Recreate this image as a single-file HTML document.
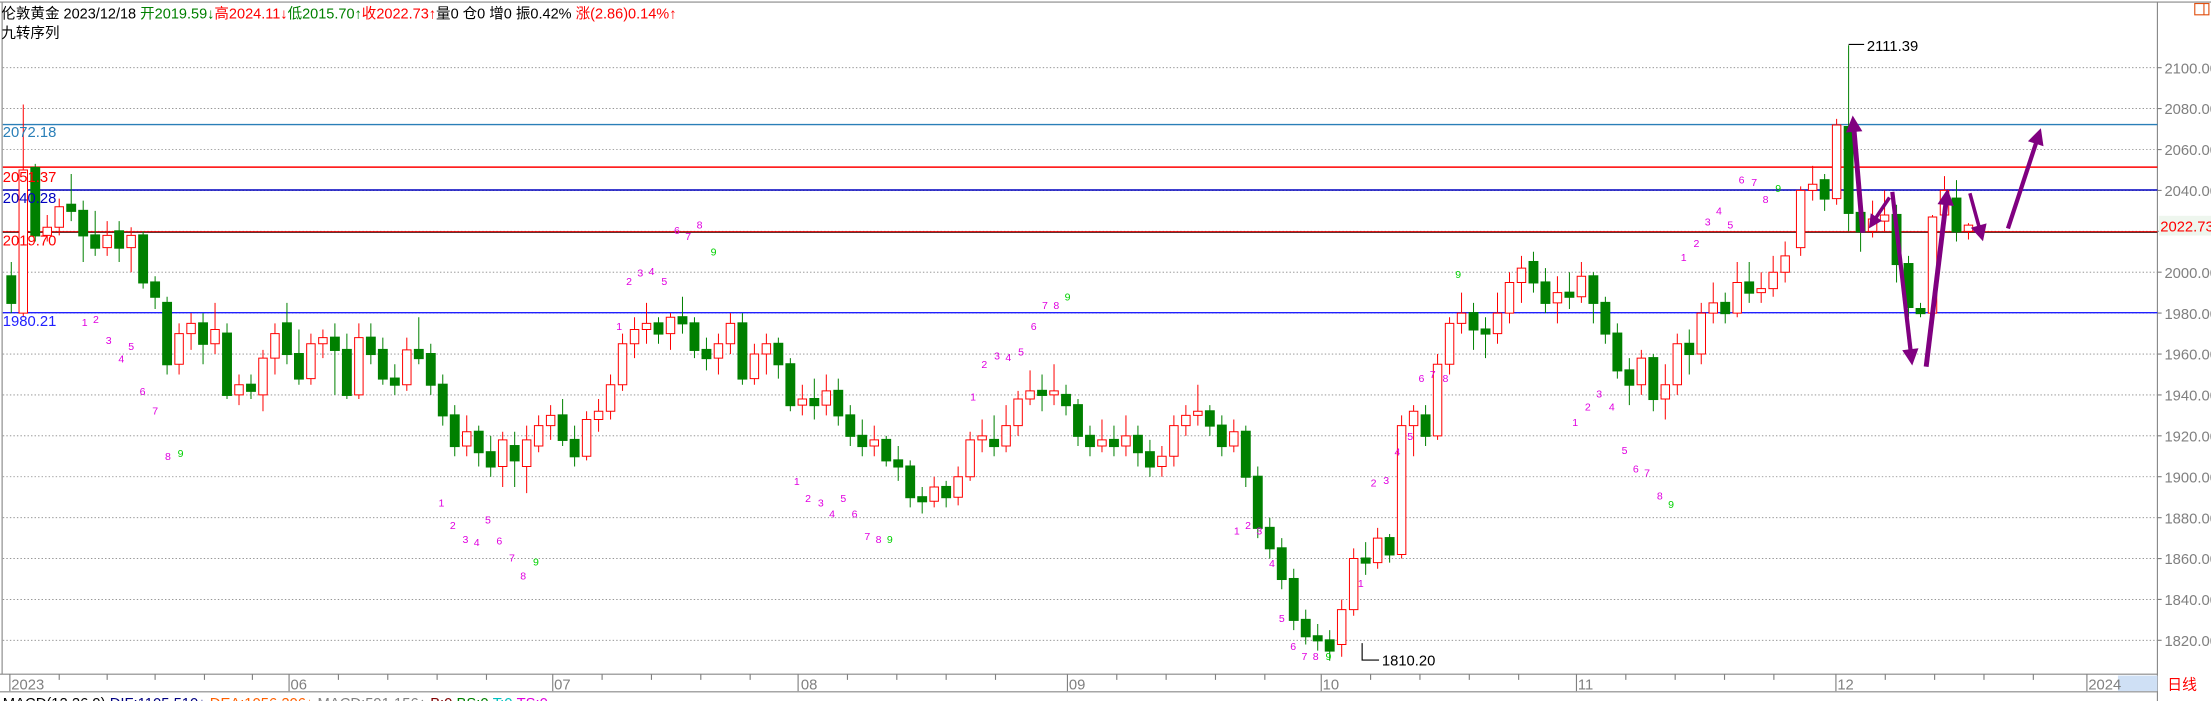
<!DOCTYPE html>
<html><head><meta charset="utf-8"><style>
html,body{margin:0;padding:0;background:#fff;overflow:hidden}
svg{display:block}
text{font-family:"Liberation Sans","Noto Sans CJK SC",sans-serif}
</style></head><body>
<svg width="2211" height="701" viewBox="0 0 1568 497" preserveAspectRatio="none" xmlns="http://www.w3.org/2000/svg">
<rect width="1568" height="497" fill="#fff"/>
<path d="M0 1.5H1568M1.5 1.5V478M1530 1.5V497M0 478H1530M0 490.5H1530" stroke="#888" stroke-width="0.8" fill="none"/>
<g stroke="#888" stroke-width="0.6" stroke-dasharray="1 1.5">
<path d="M2 48H1530M2 77H1530M2 106H1530M2 135H1530M2 164H1530M2 193H1530M2 222H1530M2 251H1530M2 280H1530M2 309H1530M2 338H1530M2 367H1530M2 396H1530M2 425H1530M2 454H1530"/>
</g>
<path d="M2 88.3H1530" stroke="#2a7fb8" stroke-width="1"/>
<path d="M2 118.5H1530" stroke="#ff0000" stroke-width="1"/>
<path d="M2 134.7H1530" stroke="#0000c0" stroke-width="1"/>
<path d="M2 164.4H1530" stroke="#e00000" stroke-width="1"/>
<path d="M2 164.9H1530" stroke="#404040" stroke-width="0.5"/>
<path d="M2 221.7H1530" stroke="#2020ff" stroke-width="1"/>
<g transform="matrix(1 0 0 -1.45 0 3093)">
<g fill="#008000" stroke="#008000" stroke-width="1">
<path vector-effect="non-scaling-stroke" fill="none" d="M8 1980V2005M25 2015V2053M50.5 2025V2048M59 2005V2035M67.5 2008V2030M84.5 2005V2025M101.5 1992V2020M110 1982V1998M118.5 1950V1988M144 1955V1980M161 1938V1975M178 1938V1950M203.5 1955V1985M212 1945V1972M237.5 1940V1975M246 1938V1970M263 1955V1975M271.5 1945V1968M280 1940V1955M297 1955V1978M305.5 1940V1965M314 1925V1950M322.5 1910V1935M339.5 1905V1925M348 1900V1920M365 1895V1922M399 1915V1938M407.5 1905V1925M467 1965V1978M484 1970V1988M492.5 1958V1978M501 1952V1968M526.5 1945V1980M552 1948V1968M560.5 1932V1958M577.5 1928V1948M594.5 1925V1948M603 1915V1935M611.5 1910V1928M628.5 1905V1920M637 1898V1915M645.5 1885V1908M654 1882V1895M671 1885V1898M705 1910V1930M739 1932V1950M756 1930V1945M764.5 1915V1938M773 1910V1925M790 1910V1925M807 1905V1925M815.5 1900V1918M858 1920V1935M866.5 1910V1930M883.5 1895V1925M892 1870V1905M900.5 1860V1880M909 1845V1870M917.5 1825V1855M926 1818V1835M934.5 1815V1828M943 1810V1825M968.5 1852V1868M985.5 1858V1872M1011 1915V1935M1045 1962V1985M1053.5 1958V1978M1087.5 1990V2010M1096 1980V2002M1113 1982V2000M1130 1975V2000M1138.5 1965V1988M1147 1948V1975M1155.5 1935V1958M1172.5 1932V1960M1198 1950V1972M1223.5 1975V1990M1240.5 1985V2005M1294 2030V2048M1311 2020V2111M1319.5 2010V2030M1345 1995V2033M1353.5 1978V2008M1362 1978V1985M1387.5 2015V2045"/>
<rect x="5" y="1985" width="6" height="13"/><rect x="22" y="2018" width="6" height="33"/><rect x="47.5" y="2030" width="6" height="3"/><rect x="56" y="2018" width="6" height="12"/><rect x="64.5" y="2012" width="6" height="6"/><rect x="81.5" y="2012" width="6" height="8"/><rect x="98.5" y="1995" width="6" height="23"/><rect x="107" y="1988" width="6" height="7"/><rect x="115.5" y="1955" width="6" height="30"/><rect x="141" y="1965" width="6" height="10"/><rect x="158" y="1940" width="6" height="30"/><rect x="175" y="1942" width="6" height="3"/><rect x="200.5" y="1960" width="6" height="15"/><rect x="209" y="1948" width="6" height="12"/><rect x="234.5" y="1962" width="6" height="6"/><rect x="243" y="1940" width="6" height="22"/><rect x="260" y="1960" width="6" height="8"/><rect x="268.5" y="1948" width="6" height="14"/><rect x="277" y="1945" width="6" height="3"/><rect x="294" y="1958" width="6" height="4"/><rect x="302.5" y="1945" width="6" height="15"/><rect x="311" y="1930" width="6" height="15"/><rect x="319.5" y="1915" width="6" height="15"/><rect x="336.5" y="1912" width="6" height="10"/><rect x="345" y="1905" width="6" height="7"/><rect x="362" y="1908" width="6" height="7"/><rect x="396" y="1918" width="6" height="12"/><rect x="404.5" y="1910" width="6" height="8"/><rect x="464" y="1970" width="6" height="5"/><rect x="481" y="1975" width="6" height="3"/><rect x="489.5" y="1962" width="6" height="13"/><rect x="498" y="1958" width="6" height="4"/><rect x="523.5" y="1948" width="6" height="27"/><rect x="549" y="1955" width="6" height="10"/><rect x="557.5" y="1935" width="6" height="20"/><rect x="574.5" y="1935" width="6" height="3"/><rect x="591.5" y="1930" width="6" height="12"/><rect x="600" y="1920" width="6" height="10"/><rect x="608.5" y="1915" width="6" height="5"/><rect x="625.5" y="1908" width="6" height="10"/><rect x="634" y="1905" width="6" height="3"/><rect x="642.5" y="1890" width="6" height="15"/><rect x="651" y="1888" width="6" height="2"/><rect x="668" y="1890" width="6" height="5"/><rect x="702" y="1915" width="6" height="3"/><rect x="736" y="1940" width="6" height="2"/><rect x="753" y="1935" width="6" height="5"/><rect x="761.5" y="1920" width="6" height="15"/><rect x="770" y="1915" width="6" height="5"/><rect x="787" y="1915" width="6" height="3"/><rect x="804" y="1912" width="6" height="8"/><rect x="812.5" y="1905" width="6" height="7"/><rect x="855" y="1925" width="6" height="7"/><rect x="863.5" y="1915" width="6" height="10"/><rect x="880.5" y="1900" width="6" height="22"/><rect x="889" y="1875" width="6" height="25"/><rect x="897.5" y="1865" width="6" height="10"/><rect x="906" y="1850" width="6" height="15"/><rect x="914.5" y="1830" width="6" height="20"/><rect x="923" y="1822" width="6" height="8"/><rect x="931.5" y="1820" width="6" height="2"/><rect x="940" y="1815" width="6" height="5"/><rect x="965.5" y="1858" width="6" height="2"/><rect x="982.5" y="1862" width="6" height="8"/><rect x="1008" y="1920" width="6" height="10"/><rect x="1042" y="1972" width="6" height="8"/><rect x="1050.5" y="1970" width="6" height="2"/><rect x="1084.5" y="1995" width="6" height="10"/><rect x="1093" y="1985" width="6" height="10"/><rect x="1110" y="1988" width="6" height="2"/><rect x="1127" y="1985" width="6" height="13"/><rect x="1135.5" y="1970" width="6" height="15"/><rect x="1144" y="1952" width="6" height="18"/><rect x="1152.5" y="1945" width="6" height="7"/><rect x="1169.5" y="1938" width="6" height="20"/><rect x="1195" y="1960" width="6" height="5"/><rect x="1220.5" y="1980" width="6" height="5"/><rect x="1237.5" y="1990" width="6" height="5"/><rect x="1291" y="2036" width="6" height="9"/><rect x="1308" y="2029" width="6" height="42"/><rect x="1316.5" y="2020" width="6" height="9"/><rect x="1342" y="2004" width="6" height="24"/><rect x="1350.5" y="1983" width="6" height="21"/><rect x="1359" y="1980" width="6" height="2"/><rect x="1384.5" y="2020" width="6" height="16"/>
</g>
<g fill="#fff" stroke="#ff0000">
<path vector-effect="non-scaling-stroke" fill="none" d="M16.5 2050V2082M16.5 1978V1980M33.5 2015V2018M33.5 2022V2028M42 2018V2022M42 2032V2036M76 2008V2025M93 2000V2022M127 1950V1975M135.5 1962V1980M152.5 1960V1985M169.5 1935V1950M186.5 1932V1962M195 1950V1975M220.5 1945V1970M229 1958V1972M254.5 1938V1975M288.5 1942V1968M331 1910V1930M356.5 1895V1922M373.5 1892V1925M382 1912V1930M390.5 1918V1935M416 1908V1932M424.5 1922V1938M433 1928V1950M441.5 1942V1970M450 1958V1978M458.5 1965V1985M475.5 1962V1980M509.5 1950V1970M518 1960V1980M535 1945V1965M543.5 1950V1970M569 1930V1945M586 1930V1950M620 1910V1925M662.5 1885V1900M679.5 1886V1905M688 1898V1922M696.5 1912V1928M713.5 1912V1935M722 1920V1942M730.5 1935V1952M747.5 1935V1955M781.5 1912V1928M798.5 1910V1930M824 1900V1915M832.5 1905V1930M841 1920V1935M849.5 1925V1945M875 1912V1928M951.5 1812V1840M960 1832V1865M977 1855V1875M994 1860V1930M1002.5 1910V1935M1019.5 1918V1960M1028 1950V1978M1036.5 1970V1990M1062 1965V1990M1070.5 1975V2000M1079 1985V2008M1104.5 1975V1998M1121.5 1985V2005M1164 1940V1962M1181 1928V1955M1189.5 1940V1970M1206.5 1955V1985M1215 1975V1995M1232 1978V2005M1249 1985V2000M1257.5 1988V2008M1266 1995V2015M1277 2008V2042M1285.5 2035V2052M1302.5 2033V2075M1328 2017V2035M1336.5 2020V2040M1370.5 1975V2028M1379 2025V2047M1396 2016V2024"/>
<rect vector-effect="non-scaling-stroke" x="13.5" y="1980" width="6" height="70"/><rect vector-effect="non-scaling-stroke" x="30.5" y="2018" width="6" height="4"/><rect vector-effect="non-scaling-stroke" x="39" y="2022" width="6" height="10"/><rect vector-effect="non-scaling-stroke" x="73" y="2012" width="6" height="6"/><rect vector-effect="non-scaling-stroke" x="90" y="2012" width="6" height="6"/><rect vector-effect="non-scaling-stroke" x="124" y="1955" width="6" height="15"/><rect vector-effect="non-scaling-stroke" x="132.5" y="1970" width="6" height="5"/><rect vector-effect="non-scaling-stroke" x="149.5" y="1965" width="6" height="7"/><rect vector-effect="non-scaling-stroke" x="166.5" y="1940" width="6" height="5"/><rect vector-effect="non-scaling-stroke" x="183.5" y="1940" width="6" height="18"/><rect vector-effect="non-scaling-stroke" x="192" y="1958" width="6" height="12"/><rect vector-effect="non-scaling-stroke" x="217.5" y="1948" width="6" height="17"/><rect vector-effect="non-scaling-stroke" x="226" y="1965" width="6" height="3"/><rect vector-effect="non-scaling-stroke" x="251.5" y="1940" width="6" height="28"/><rect vector-effect="non-scaling-stroke" x="285.5" y="1945" width="6" height="17"/><rect vector-effect="non-scaling-stroke" x="328" y="1915" width="6" height="7"/><rect vector-effect="non-scaling-stroke" x="353.5" y="1905" width="6" height="13"/><rect vector-effect="non-scaling-stroke" x="370.5" y="1905" width="6" height="13"/><rect vector-effect="non-scaling-stroke" x="379" y="1915" width="6" height="10"/><rect vector-effect="non-scaling-stroke" x="387.5" y="1925" width="6" height="5"/><rect vector-effect="non-scaling-stroke" x="413" y="1910" width="6" height="18"/><rect vector-effect="non-scaling-stroke" x="421.5" y="1928" width="6" height="4"/><rect vector-effect="non-scaling-stroke" x="430" y="1932" width="6" height="13"/><rect vector-effect="non-scaling-stroke" x="438.5" y="1945" width="6" height="20"/><rect vector-effect="non-scaling-stroke" x="447" y="1965" width="6" height="7"/><rect vector-effect="non-scaling-stroke" x="455.5" y="1972" width="6" height="3"/><rect vector-effect="non-scaling-stroke" x="472.5" y="1970" width="6" height="8"/><rect vector-effect="non-scaling-stroke" x="506.5" y="1958" width="6" height="7"/><rect vector-effect="non-scaling-stroke" x="515" y="1965" width="6" height="10"/><rect vector-effect="non-scaling-stroke" x="532" y="1948" width="6" height="12"/><rect vector-effect="non-scaling-stroke" x="540.5" y="1960" width="6" height="5"/><rect vector-effect="non-scaling-stroke" x="566" y="1935" width="6" height="3"/><rect vector-effect="non-scaling-stroke" x="583" y="1935" width="6" height="7"/><rect vector-effect="non-scaling-stroke" x="617" y="1915" width="6" height="3"/><rect vector-effect="non-scaling-stroke" x="659.5" y="1888" width="6" height="7"/><rect vector-effect="non-scaling-stroke" x="676.5" y="1890" width="6" height="10"/><rect vector-effect="non-scaling-stroke" x="685" y="1900" width="6" height="18"/><rect vector-effect="non-scaling-stroke" x="693.5" y="1918" width="6" height="2"/><rect vector-effect="non-scaling-stroke" x="710.5" y="1915" width="6" height="10"/><rect vector-effect="non-scaling-stroke" x="719" y="1925" width="6" height="13"/><rect vector-effect="non-scaling-stroke" x="727.5" y="1938" width="6" height="4"/><rect vector-effect="non-scaling-stroke" x="744.5" y="1940" width="6" height="2"/><rect vector-effect="non-scaling-stroke" x="778.5" y="1915" width="6" height="3"/><rect vector-effect="non-scaling-stroke" x="795.5" y="1915" width="6" height="5"/><rect vector-effect="non-scaling-stroke" x="821" y="1905" width="6" height="5"/><rect vector-effect="non-scaling-stroke" x="829.5" y="1910" width="6" height="15"/><rect vector-effect="non-scaling-stroke" x="838" y="1925" width="6" height="5"/><rect vector-effect="non-scaling-stroke" x="846.5" y="1930" width="6" height="2"/><rect vector-effect="non-scaling-stroke" x="872" y="1915" width="6" height="7"/><rect vector-effect="non-scaling-stroke" x="948.5" y="1818" width="6" height="17"/><rect vector-effect="non-scaling-stroke" x="957" y="1835" width="6" height="25"/><rect vector-effect="non-scaling-stroke" x="974" y="1858" width="6" height="12"/><rect vector-effect="non-scaling-stroke" x="991" y="1862" width="6" height="63"/><rect vector-effect="non-scaling-stroke" x="999.5" y="1925" width="6" height="7"/><rect vector-effect="non-scaling-stroke" x="1016.5" y="1920" width="6" height="35"/><rect vector-effect="non-scaling-stroke" x="1025" y="1955" width="6" height="20"/><rect vector-effect="non-scaling-stroke" x="1033.5" y="1975" width="6" height="5"/><rect vector-effect="non-scaling-stroke" x="1059" y="1970" width="6" height="10"/><rect vector-effect="non-scaling-stroke" x="1067.5" y="1980" width="6" height="15"/><rect vector-effect="non-scaling-stroke" x="1076" y="1995" width="6" height="7"/><rect vector-effect="non-scaling-stroke" x="1101.5" y="1985" width="6" height="5"/><rect vector-effect="non-scaling-stroke" x="1118.5" y="1988" width="6" height="10"/><rect vector-effect="non-scaling-stroke" x="1161" y="1945" width="6" height="13"/><rect vector-effect="non-scaling-stroke" x="1178" y="1938" width="6" height="7"/><rect vector-effect="non-scaling-stroke" x="1186.5" y="1945" width="6" height="20"/><rect vector-effect="non-scaling-stroke" x="1203.5" y="1960" width="6" height="20"/><rect vector-effect="non-scaling-stroke" x="1212" y="1980" width="6" height="5"/><rect vector-effect="non-scaling-stroke" x="1229" y="1980" width="6" height="15"/><rect vector-effect="non-scaling-stroke" x="1246" y="1990" width="6" height="2"/><rect vector-effect="non-scaling-stroke" x="1254.5" y="1992" width="6" height="8"/><rect vector-effect="non-scaling-stroke" x="1263" y="2000" width="6" height="8"/><rect vector-effect="non-scaling-stroke" x="1274" y="2012" width="6" height="28"/><rect vector-effect="non-scaling-stroke" x="1282.5" y="2040" width="6" height="3"/><rect vector-effect="non-scaling-stroke" x="1299.5" y="2036" width="6" height="36"/><rect vector-effect="non-scaling-stroke" x="1325" y="2020" width="6" height="6"/><rect vector-effect="non-scaling-stroke" x="1333.5" y="2025" width="6" height="3"/><rect vector-effect="non-scaling-stroke" x="1367.5" y="1980" width="6" height="47"/><rect vector-effect="non-scaling-stroke" x="1376" y="2028" width="6" height="12"/><rect vector-effect="non-scaling-stroke" x="1393" y="2020" width="6" height="3"/>
</g>
</g>
<g font-size="10.5">
<text x="2" y="97" fill="#2a7fb8">2072.18</text>
<text x="2" y="129" fill="#ff0000">2051.37</text>
<text x="2" y="144" fill="#0000c0">2040.28</text>
<text x="2" y="174" fill="#ff0000">2019.70</text>
<text x="2" y="231" fill="#2020ff">1980.21</text>
</g>
<path d="M1311 31.5H1322M966 456V468H978" stroke="#000" stroke-width="0.8" fill="none"/>
<text x="1324" y="36" font-size="10.5" fill="#000">2111.39</text>
<text x="980" y="472" font-size="10.5" fill="#000">1810.20</text>
<g fill="#800080" stroke="#800080">
<path d="M1321 165L1314.9 93" stroke-width="3.5"/><polygon points="1314,83 1319.9,92.6 1309.9,93.4"/>
<path d="M1340 140L1330.4 154.3" stroke-width="2.5"/><polygon points="1326,161 1333.7,156.5 1327.1,152.1"/>
<path d="M1342 136L1354.9 248.1" stroke-width="3"/><polygon points="1356,258 1359.8,247.5 1349.9,248.7"/>
<path d="M1366 260L1379.9 144.9" stroke-width="3.5"/><polygon points="1381,135 1384.9,145.5 1374.9,144.3"/>
<path d="M1397 137L1403.4 160.4" stroke-width="2.5"/><polygon points="1406,170 1408.2,159.1 1398.6,161.7"/>
<path d="M1424 162L1443.9 101.5" stroke-width="3"/><polygon points="1447,92 1448.6,103 1439.1,99.9"/>
</g>
<g font-size="7.5" fill="#e000e0">
<text x="58" y="231">1</text><text x="66" y="229">2</text><text x="75" y="244">3</text><text x="84" y="257">4</text><text x="91" y="248">5</text><text x="99" y="280">6</text><text x="108" y="294">7</text><text x="117" y="326">8</text>
<text x="437" y="234">1</text><text x="444" y="202">2</text><text x="452" y="196">3</text><text x="460" y="195">4</text><text x="469" y="202">5</text><text x="478" y="166">6</text><text x="486" y="170">7</text><text x="494" y="162">8</text>
<text x="311" y="359">1</text><text x="319" y="375">2</text><text x="328" y="385">3</text><text x="336" y="387">4</text><text x="344" y="371">5</text><text x="352" y="386">6</text><text x="361" y="398">7</text><text x="369" y="411">8</text>
<text x="563" y="344">1</text><text x="571" y="356">2</text><text x="580" y="359">3</text><text x="588" y="367">4</text><text x="596" y="356">5</text><text x="604" y="367">6</text><text x="613" y="383">7</text><text x="621" y="385">8</text>
<text x="688" y="284">1</text><text x="696" y="261">2</text><text x="705" y="255">3</text><text x="713" y="256">4</text><text x="722" y="252">5</text><text x="731" y="234">6</text><text x="739" y="219">7</text><text x="747" y="219">8</text>
<text x="875" y="379">1</text><text x="883" y="375">2</text><text x="891" y="379">3</text><text x="900" y="402">4</text><text x="907" y="441">5</text><text x="915" y="461">6</text><text x="923" y="468">7</text><text x="931" y="468">8</text>
<text x="963" y="416">1</text><text x="972" y="345">2</text><text x="981" y="343">3</text><text x="989" y="323">4</text><text x="998" y="312">5</text><text x="1006" y="271">6</text><text x="1014" y="268">7</text><text x="1023" y="271">8</text>
<text x="1115" y="302">1</text><text x="1124" y="291">2</text><text x="1132" y="282">3</text><text x="1141" y="291">4</text><text x="1150" y="322">5</text><text x="1158" y="335">6</text><text x="1166" y="338">7</text><text x="1175" y="354">8</text>
<text x="1192" y="185">1</text><text x="1201" y="175">2</text><text x="1209" y="160">3</text><text x="1217" y="152">4</text><text x="1225" y="162">5</text><text x="1233" y="130">6</text><text x="1242" y="132">7</text><text x="1250" y="144">8</text>
</g>
<g font-size="7.5" fill="#00d000">
<text x="126" y="324">9</text><text x="504" y="181">9</text><text x="378" y="401">9</text><text x="629" y="385">9</text><text x="755" y="213">9</text><text x="940" y="468">9</text><text x="1032" y="197">9</text><text x="1183" y="360">9</text><text x="1259" y="136">9</text>
</g>
<g font-size="10.5" fill="#808080">
<text x="1535" y="52">2100.00</text><text x="1535" y="81">2080.00</text><text x="1535" y="110">2060.00</text><text x="1535" y="139">2040.00</text><text x="1535" y="197">2000.00</text><text x="1535" y="226">1980.00</text><text x="1535" y="255">1960.00</text><text x="1535" y="284">1940.00</text><text x="1535" y="313">1920.00</text><text x="1535" y="342">1900.00</text><text x="1535" y="371">1880.00</text><text x="1535" y="400">1860.00</text><text x="1535" y="429">1840.00</text><text x="1535" y="458">1820.00</text>
</g>
<path d="M1530 48h3M1530 77h3M1530 106h3M1530 135h3M1530 164h3M1530 193h3M1530 222h3M1530 251h3M1530 280h3M1530 309h3M1530 338h3M1530 367h3M1530 396h3M1530 425h3M1530 454h3" stroke="#808080" stroke-width="0.8"/>
<rect x="1531" y="153" width="37" height="14" fill="#eef6ee"/>
<text x="1532" y="164" font-size="10.5" fill="#ff0000">2022.73</text>
<rect x="1556.5" y="2.5" width="10" height="8" fill="none" stroke="#e05010" stroke-width="0.8"/><path d="M1563 2.5V10.5" stroke="#e05010" stroke-width="0.8"/>
<rect x="1502" y="479" width="28" height="11" fill="#cfe0f5"/>
<g font-size="10.5" fill="#808080">
<text x="8" y="489">2023</text><text x="206" y="489">06</text><text x="393" y="489">07</text><text x="568" y="489">08</text><text x="758" y="489">09</text><text x="938" y="489">10</text><text x="1119" y="489">11</text><text x="1303" y="489">12</text><text x="1481" y="489">2024</text>
</g>
<path d="M7 478V490M205 478V490M392 478V490M566 478V490M757 478V490M937 478V490M1118 478V490M1302 478V490M1480 478V490M42 478v4M76 478v4M110 478v4M145 478v4M179 478v4M240 478v4M275 478v4M310 478v4M345 478v4M427 478v4M462 478v4M497 478v4M532 478v4M601 478v4M636 478v4M671 478v4M706 478v4M792 478v4M827 478v4M862 478v4M897 478v4M972 478v4M1007 478v4M1042 478v4M1077 478v4M1153 478v4M1188 478v4M1223 478v4M1258 478v4M1337 478v4M1372 478v4M1407 478v4M1442 478v4" stroke="#808080" stroke-width="0.8"/>
<text x="1537" y="489" font-size="10.5" fill="#ff0000">日线</text>
<text x="1" y="13" font-size="10.3"><tspan fill="#000">伦敦黄金 2023/12/18 </tspan><tspan fill="#008000">开2019.59↓</tspan><tspan fill="#ff0000">高2024.11↓</tspan><tspan fill="#008000">低2015.70↑</tspan><tspan fill="#ff0000">收2022.73↑</tspan><tspan fill="#000">量0  仓0 增0 振0.42% </tspan><tspan fill="#ff0000">涨(2.86)0.14%↑</tspan></text>
<text x="1" y="27" font-size="10.3" fill="#000">九转序列</text>
<text x="2" y="502" font-size="10.5"><tspan fill="#000">MACD(12,26,9) </tspan><tspan fill="#000080">DIF:1105.510↓ </tspan><tspan fill="#ff6000">DEA:1056.206↓ </tspan><tspan fill="#808080">MACD:591.156↑ </tspan><tspan fill="#800000">B:0 </tspan><tspan fill="#008000">BS:0 </tspan><tspan fill="#00c0c0">T:0 </tspan><tspan fill="#e000e0">TS:0</tspan></text>
</svg>
</body></html>
